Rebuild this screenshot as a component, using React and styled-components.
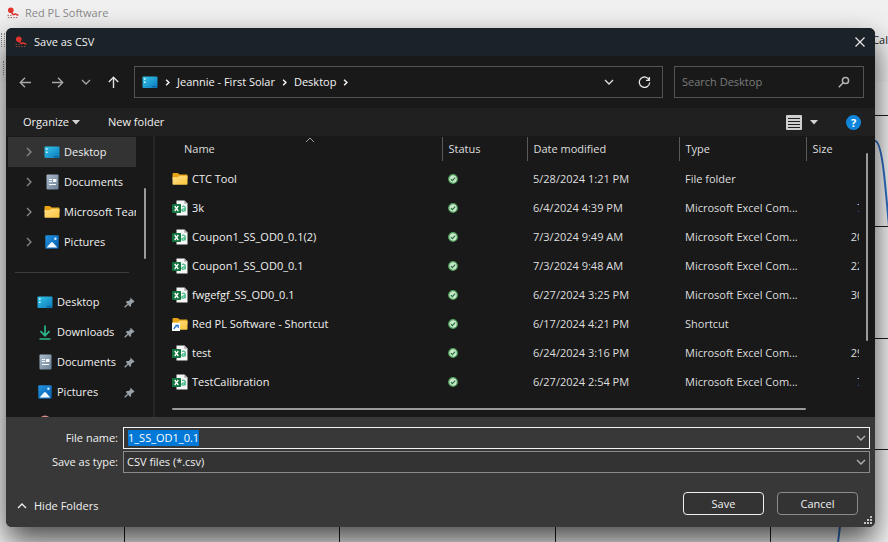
import React, { useEffect, useRef, useState } from 'react';
import styled, { createGlobalStyle } from 'styled-components';

const GlobalStyle = createGlobalStyle`
  * {
    box-sizing: border-box;
  }

  body {
    margin: 0;
    background: #f0f0f0;
    font-family: 'Open Sans', 'Noto Sans', sans-serif;
    font-size: 11px;
    line-height: 16px;
  }

  button, input, select {
    font: inherit;
    color: inherit;
  }

  svg {
    display: block;
    flex: none;
  }
`;

const Screen = styled.div`
  position: relative;
  display: flex;
  min-height: 100vh;
  padding: 28px 13px 15px 6px;
  overflow: hidden;
`;

/* main window behind the dialog */
const Backdrop = styled.div`
  position: absolute;
  inset: 0;
  display: flex;
  flex-direction: column;
  background: #f0f0f0;
`;

const WindowTitle = styled.div`
  display: flex;
  align-items: center;
  gap: 6px;
  height: 26px;
  padding-left: 7px;
  color: #8a8a8a;
`;

const WindowToolbar = styled.div`
  display: flex;
  align-items: center;
  justify-content: space-between;
  height: 28px;
  padding-left: ${(props) => props.$indent}px;
  color: #222;
`;

const Grip = styled.span`
  width: 4px;
  height: 14px;
  border-left: 1px dotted #888;
  border-right: 1px dotted #888;
`;

const PlotArea = styled.div`
  flex: 1;
  min-height: 0;
  background: #f5f5f5;

  svg {
    width: 100%;
    height: 100%;
  }
`;

const Dialog = styled.div`
  position: relative;
  display: flex;
  flex: 1;
  flex-direction: column;
  min-width: 0;
  overflow: hidden;
  border-radius: 6px;
  background: #191919;
  color: #f0f0f0;
  box-shadow: 0 14px 30px rgba(0, 0, 0, 0.7);
`;

const TitleBar = styled.div`
  display: flex;
  align-items: center;
  gap: 7px;
  height: 28px;
  padding: 0 8px 0 9px;
  background: #1b2228;
`;

const DialogTitle = styled.h1`
  flex: 1;
  margin: 0;
  font-size: 11px;
  font-weight: 400;
`;

const IconButton = styled.button`
  display: flex;
  align-items: center;
  justify-content: center;
  width: ${(props) => props.$width || 14}px;
  height: 16px;
  padding: 0;
  border: 0;
  background: none;
  color: ${(props) => props.$color || '#e0e0e0'};
`;

const NavBar = styled.div`
  display: flex;
  align-items: center;
  height: 52px;
  padding: 0 11px;
`;

const NavButtons = styled.div`
  display: flex;
  gap: 16px;
  width: 117px;
`;

const AddressBar = styled.div`
  display: flex;
  flex: 1;
  align-items: center;
  height: 32px;
  padding: 0 11px 0 7px;
  border: 1px solid #535353;
`;

const Crumbs = styled.div`
  display: flex;
  flex: 1;
  align-items: center;
  gap: 6px;
`;

const Crumb = styled.a`
  color: #f4f4f4;
  text-decoration: none;
`;

const AddressActions = styled.div`
  display: flex;
  gap: 21px;
`;

const SearchBox = styled.div`
  display: flex;
  align-items: center;
  width: 190px;
  height: 32px;
  margin-left: 11px;
  padding: 0 13px 0 7px;
  border: 1px solid #535353;
`;

const SearchInput = styled.input`
  flex: 1;
  min-width: 0;
  padding: 0;
  border: 0;
  outline: 0;
  background: none;

  &::placeholder {
    color: #7b7b7b;
  }
`;

const CommandBar = styled.div`
  display: flex;
  align-items: center;
  justify-content: space-between;
  height: 28px;
  padding: 0 14px 0 17px;
  background: #202020;
`;

const CommandGroup = styled.div`
  display: flex;
  align-items: center;
  gap: ${(props) => props.$gap}px;
`;

const Command = styled.button`
  display: flex;
  align-items: center;
  gap: 3px;
  padding: 0;
  border: 0;
  background: none;
`;

const HelpBadge = styled.button`
  width: 15px;
  height: 15px;
  margin-left: 20px;
  padding: 0;
  border: 0;
  border-radius: 50%;
  background: #0f86dc;
  color: #fff;
  font-weight: 700;
  line-height: 15px;
`;

const Body = styled.div`
  display: flex;
  flex: 1;
  min-height: 0;
`;

const Sidebar = styled.nav`
  display: flex;
  width: 149px;
  height: 281px;
  padding: 1px 0 0 2px;
  overflow: hidden;
  border-right: 2px solid #262626;
`;

const Tree = styled.div`
  width: 128px;
`;

const TreeItem = styled.a`
  display: flex;
  align-items: center;
  height: 30px;
  padding: 0 ${(props) => (props.$pinned ? 3 : 0)}px 0 ${(props) => (props.$pinned ? 29 : 16)}px;
  overflow: hidden;
  background: ${(props) => (props.$active ? '#333' : 'none')};
  color: #f0f0f0;
  text-decoration: none;
  white-space: nowrap;
`;

const TreeIcon = styled.span`
  display: flex;
  justify-content: center;
  width: 16px;
  margin: 0 4px 0 ${(props) => (props.$pinned ? 0 : 10)}px;
`;

const TreeLabel = styled.span`
  flex: 1;
`;

const PinSlot = styled.span`
  width: 9px;
`;

const TreeDivider = styled.hr`
  height: 1px;
  margin: 15px 7px 14px;
  border: 0;
  background: #3c3c3c;
`;

const SidebarScroll = styled.div`
  width: 2px;
  height: 71px;
  margin: 51px 0 0 8px;
  border-radius: 1px;
  background: #9b9b9b;
`;

const Listing = styled.div`
  display: flex;
  flex: 1;
  flex-direction: column;
  min-width: 0;
  height: 281px;
  padding: 1px 7px 0 17px;
`;

const ListingRow = styled.div`
  display: flex;
  justify-content: space-between;
  height: 265px;
`;

const TableClip = styled.div`
  flex: 1;
  min-width: 0;
  overflow: hidden;
`;

const FileTable = styled.table`
  width: 708px;
  table-layout: fixed;
  border-collapse: collapse;
`;

const HeadCell = styled.th`
  height: 24px;
  padding: 0 0 0 ${(props) => (props.$first ? 12 : 6)}px;
  border-left: ${(props) => (props.$first ? '0' : '1px solid #5a5a5a')};
  color: #dedede;
  font-weight: 400;
  text-align: left;
`;

const HeadName = styled.div`
  position: relative;

  svg {
    position: absolute;
    top: -6px;
    left: 121px;
  }
`;

const Spacer = styled.td`
  height: 3px;
  padding: 0;
`;

const Cell = styled.td`
  height: 29px;
  padding: 0 0 0 ${(props) => props.$inset || 0}px;
  color: #dedede;
  text-align: ${(props) => props.$align || 'left'};
  white-space: nowrap;
`;

const FileName = styled.div`
  display: flex;
  align-items: center;
  gap: 4px;
  color: #f0f0f0;
`;

const VerticalThumb = styled.div`
  width: 2px;
  height: 188px;
  margin: 16px 0 0 7px;
  border-radius: 1px;
  background: #9b9b9b;
`;

const HorizontalThumb = styled.div`
  width: calc(100% - 62px);
  height: 2px;
  margin-top: 6px;
  border-radius: 1px;
  background: #9b9b9b;
`;

const Footer = styled.form`
  display: flex;
  flex-direction: column;
  height: 110px;
  padding: 10px 5px 0;
  background: #383838;
`;

const Fields = styled.div`
  display: grid;
  grid-template-columns: 107px 1fr;
  row-gap: 2px;
  column-gap: 5px;
  align-items: center;
`;

const FieldLabel = styled.label`
  text-align: right;
`;

const Field = styled.div`
  display: flex;
  align-items: center;
  position: relative;
  height: 22px;
  padding: 0 3px;
  border: 1px solid ${(props) => (props.$focused ? '#f4f4f4' : '#8a8a8a')};
  background: ${(props) => (props.$focused ? '#383838' : '#333')};
`;

const NameInput = styled.input`
  flex: 1;
  min-width: 0;
  padding: 0 1px;
  border: 0;
  outline: 0;
  background: none;

  &::selection {
    background: #0078d7;
    color: #fff;
  }
`;

const TypeSelect = styled.select`
  flex: 1;
  padding: 0;
  border: 0;
  outline: 0;
  appearance: none;
  background: #333;
`;

const FieldArrow = styled.span`
  position: absolute;
  right: 3px;
  color: #b4b4b4;
  pointer-events: none;
`;

const Actions = styled.div`
  display: flex;
  align-items: center;
  gap: 13px;
  padding: 19px 12px 0 6px;
`;

const HideFolders = styled.button`
  display: flex;
  align-items: center;
  gap: 7px;
  margin: 5px auto 0 0;
  padding: 0;
  border: 0;
  background: none;
`;

const ActionButton = styled.button`
  width: 81px;
  height: 23px;
  padding: 0;
  border: 1px solid ${(props) => (props.$primary ? '#f0f0f0' : '#8c8c8c')};
  border-radius: 4px;
  background: #333;
`;

const ResizeGrip = styled.svg`
  position: absolute;
  right: 2px;
  bottom: 2px;
`;

const Chevron = ({ dir = 'down', size = 10, color = 'currentColor', width = 1.3 }) => {
  const paths = {
    down: 'M1 3l4 4 4-4',
    up: 'M1 7l4-4 4 4',
    right: 'M3 1l4 4-4 4',
  };
  return (
    <svg width={size} height={size} viewBox="0 0 10 10" fill="none" stroke={color} strokeWidth={width}>
      <path d={paths[dir]} />
    </svg>
  );
};

const Caret = () => (
  <svg width="8" height="5" viewBox="0 0 8 5">
    <path d="M0 0h8L4 4.6z" fill="#d4d4d4" />
  </svg>
);

const AppLogo = () => (
  <svg width="12" height="12" viewBox="0 0 12 12">
    <circle cx="3.8" cy="3.3" r="2.8" fill="#e0342c" />
    <path d="M4.2 5l2 2.6 2.4-.6 2.8 1.4" fill="none" stroke="#e0342c" strokeWidth="1.5" />
    <path d="M.5 8.3h4M.8 10.6h10.4" stroke="#a0504a" strokeWidth=".9" strokeDasharray="1.5 1.2" />
  </svg>
);

const DesktopIcon = () => (
  <svg width="16" height="13" viewBox="0 0 16 13">
    <defs>
      <linearGradient id="desktopFill" x1="0" y1="0" x2="1" y2="1">
        <stop offset="0" stopColor="#35c6e8" />
        <stop offset="1" stopColor="#0b78bd" />
      </linearGradient>
    </defs>
    <rect x=".5" y=".5" width="15" height="11.5" rx="1" fill="url(#desktopFill)" />
    <path d="M2 2.2h1.6v1.5H2zM2 5.4h1.6v1.5H2z" fill="#d7f6ff" />
    <path d="M10.5 10h1v1.2h-1zM12.5 10h1v1.2h-1z" fill="#063f66" />
  </svg>
);

const DocumentIcon = () => (
  <svg width="13" height="16" viewBox="0 0 13 16">
    <defs>
      <linearGradient id="documentFill" x1="0" y1="0" x2="1" y2="1">
        <stop offset="0" stopColor="#a9bccb" />
        <stop offset="1" stopColor="#6c8096" />
      </linearGradient>
    </defs>
    <rect x=".5" y=".5" width="12" height="15" rx="1" fill="url(#documentFill)" />
    <path d="M3 5.5h3M3 7.5h3M3 10.5h7" stroke="#f7fbff" />
    <rect x="7" y="5" width="3.4" height="3" fill="#f7fbff" />
  </svg>
);

const FolderIcon = ({ shortcut }) => (
  <svg width="16" height="14" viewBox="0 0 16 14">
    <defs>
      <linearGradient id="folderFill" x1="0" y1="0" x2="1" y2="1">
        <stop offset="0" stopColor="#ffe08a" />
        <stop offset="1" stopColor="#fbc53c" />
      </linearGradient>
    </defs>
    <path d="M.5 2.2C.5 1.3 1 1 1.8 1h3.4c.6 0 .9.2 1.3.6l1 1h7c.6 0 1 .4 1 1V7H.5z" fill="#e8a317" />
    <path d="M.5 5.2h5.4l1.6-1.4h7c.6 0 1 .4 1 1v7c0 .6-.4 1-1 1h-13c-.6 0-1-.4-1-1z" fill="url(#folderFill)" />
    {shortcut && (
      <g>
        <rect x="0" y="6" width="8" height="8" fill="#fff" />
        <path d="M2 12.3c.2-1.8 1-2.8 2.8-3.2M3.4 8.3h2.8V11" fill="none" stroke="#1f6fd0" strokeWidth="1.2" />
      </g>
    )}
  </svg>
);

const PicturesIcon = () => (
  <svg width="14" height="14" viewBox="0 0 14 14">
    <defs>
      <linearGradient id="picturesFill" x1="0" y1="0" x2="1" y2="1">
        <stop offset="0" stopColor="#2193e0" />
        <stop offset="1" stopColor="#0a5eae" />
      </linearGradient>
    </defs>
    <rect x=".3" y=".3" width="13.4" height="13.4" rx="1" fill="url(#picturesFill)" />
    <path d="M1.6 12.6L6 7.6c.5-.6 1.4-.6 1.9 0l4.4 5z" fill="#f1f9ff" />
    <circle cx="10.4" cy="3.8" r="1.2" fill="#d5efff" />
  </svg>
);

const DownloadIcon = () => (
  <svg width="12" height="15" viewBox="0 0 12 15" fill="none" stroke="#2bb58a" strokeWidth="1.7">
    <path d="M6 .5v10M1.5 6.2L6 10.7l4.5-4.5M.5 14h11" />
  </svg>
);

const MusicIcon = () => (
  <svg width="14" height="14" viewBox="0 0 14 14">
    <circle cx="7" cy="7" r="6.5" fill="#d98a86" />
  </svg>
);

const PinIcon = () => (
  <svg width="11" height="11" viewBox="0 0 11 11">
    <path d="M6.4.5l4.1 4.1-1 .9-.6-.1-1.9 1.9.1 1.8-1 .9L1.9 5l.9-1 1.9.1 1.8-1.9-.1-.7z" fill="#98a0a8" />
    <path d="M3.8 7.2L.7 10.3" stroke="#98a0a8" strokeWidth="1.3" />
  </svg>
);

const CsvIcon = () => (
  <svg width="16" height="16" viewBox="0 0 16 16">
    <path d="M4.5.5h8l3 3v12h-11z" fill="#f5f5f5" />
    <path d="M12.3.5v3.2h3.2z" fill="#a8a8a8" />
    <path d="M10 6.6c1.2-.7 3.2-.5 3.2 1v3.6M13.2 8.6c-4 0-4.2 2.6-2 2.6 1.3 0 2-.8 2-1.6" fill="none" stroke="#35b57c" strokeWidth="1.2" />
    <rect x="0" y="4" width="9" height="9" rx=".8" fill="#13733f" />
    <path d="M2.7 6l3.6 5M6.3 6l-3.6 5" stroke="#fff" strokeWidth="1.3" />
  </svg>
);

const SyncedIcon = () => (
  <svg width="10" height="10" viewBox="0 0 10 10">
    <circle cx="5" cy="5" r="4.3" fill="#c9e8cb" stroke="#4f9e5c" strokeWidth="1.2" />
    <path d="M2.9 5.1l1.5 1.5 2.8-2.9" fill="none" stroke="#24703a" strokeWidth="1.2" />
  </svg>
);

const ArrowIcon = ({ dir }) => {
  const paths = {
    back: 'M12 6.5H1.5M6 1.8L1.3 6.5 6 11.2',
    forward: 'M1 6.5h10.5M7 1.8l4.7 4.7L7 11.2',
    up: 'M6.5 12V1.5M1.8 6l4.7-4.7L11.2 6',
  };
  return (
    <svg width="13" height="13" viewBox="0 0 13 13" fill="none" stroke="currentColor" strokeWidth="1.4">
      <path d={paths[dir]} />
    </svg>
  );
};

const RefreshIcon = () => (
  <svg width="13" height="13" viewBox="0 0 13 13" fill="none" stroke="currentColor" strokeWidth="1.3">
    <path d="M11.3 4.2A5.2 5.2 0 1 0 11.7 6.5M11.4 1v3.4H8" />
  </svg>
);

const SearchIcon = () => (
  <svg width="12" height="12" viewBox="0 0 12 12" fill="none" stroke="#b4b4b4" strokeWidth="1.5">
    <circle cx="7.5" cy="4.5" r="3.1" />
    <path d="M5.2 6.8L.8 11.2" />
  </svg>
);

const ViewIcon = () => (
  <svg width="16" height="15" viewBox="0 0 16 15">
    <rect width="16" height="15" rx="1" fill="#cfcfcf" />
    <path d="M2 3.5h12M2 6.5h12M2 9.5h12M2 12.5h12" stroke="#202020" />
  </svg>
);

const places = [
  { label: 'Desktop', icon: DesktopIcon, active: true },
  { label: 'Documents', icon: DocumentIcon },
  { label: 'Microsoft Teams', icon: FolderIcon },
  { label: 'Pictures', icon: PicturesIcon },
];

const pinned = [
  { label: 'Desktop', icon: DesktopIcon },
  { label: 'Downloads', icon: DownloadIcon },
  { label: 'Documents', icon: DocumentIcon },
  { label: 'Pictures', icon: PicturesIcon },
];

const csvType = 'Microsoft Excel Com...';

const files = [
  { name: 'CTC Tool', date: '5/28/2024 1:21 PM', type: 'File folder', kind: 'folder' },
  { name: '3k', date: '6/4/2024 4:39 PM', type: csvType, size: '7 KB' },
  { name: 'Coupon1_SS_OD0_0.1(2)', date: '7/3/2024 9:49 AM', type: csvType, size: '20 KB' },
  { name: 'Coupon1_SS_OD0_0.1', date: '7/3/2024 9:48 AM', type: csvType, size: '22 KB' },
  { name: 'fwgefgf_SS_OD0_0.1', date: '6/27/2024 3:25 PM', type: csvType, size: '30 KB' },
  { name: 'Red PL Software - Shortcut', date: '6/17/2024 4:21 PM', type: 'Shortcut', kind: 'shortcut' },
  { name: 'test', date: '6/24/2024 3:16 PM', type: csvType, size: '29 KB' },
  { name: 'TestCalibration', date: '6/27/2024 2:54 PM', type: csvType, size: '7 KB' },
];

const MainWindow = () => (
  <Backdrop>
    <WindowTitle>
      <AppLogo />
      Red PL Software
    </WindowTitle>
    <WindowToolbar $indent={1}>
      <Grip />
      <span>Cal</span>
    </WindowToolbar>
    <WindowToolbar $indent={3}>
      <Grip />
    </WindowToolbar>
    <PlotArea>
      <svg viewBox="0 0 888 460" preserveAspectRatio="none" fill="none">
        <path
          d="M124.5 32v428M339.5 32v428M555.5 32v428M770.5 32v428M124 33.5h764M124 144.5h764M124 256.5h764M124 367.5h764"
          stroke="#1c1c1c"
        />
        <path d="M838 460c10-60 22-401 37-401 7 0 10 40 14 86" stroke="#2f6fc4" strokeWidth="2" />
      </svg>
    </PlotArea>
  </Backdrop>
);

const FolderTree = () => (
  <Sidebar>
    <Tree>
      {places.map(({ label, icon: Icon, active }) => (
        <TreeItem href="#" key={label} $active={active}>
          <Chevron dir="right" color="#8a8a8a" />
          <TreeIcon>
            <Icon />
          </TreeIcon>
          <TreeLabel>{label}</TreeLabel>
        </TreeItem>
      ))}
      <TreeDivider />
      {pinned.map(({ label, icon: Icon }) => (
        <TreeItem href="#" key={label} $pinned>
          <TreeIcon $pinned>
            <Icon />
          </TreeIcon>
          <TreeLabel>{label}</TreeLabel>
          <PinSlot>
            <PinIcon />
          </PinSlot>
        </TreeItem>
      ))}
      <TreeItem href="#" $pinned aria-label="Music">
        <TreeIcon $pinned>
          <MusicIcon />
        </TreeIcon>
      </TreeItem>
    </Tree>
    <SidebarScroll />
  </Sidebar>
);

const FileList = () => (
  <Listing>
    <ListingRow>
      <TableClip>
        <FileTable>
          <colgroup>
            <col width="270" />
            <col width="85" />
            <col width="152" />
            <col width="127" />
            <col />
          </colgroup>
          <thead>
            <tr>
              <HeadCell $first>
                <HeadName>
                  Name
                  <Chevron dir="up" color="#9b9b9b" width={1} />
                </HeadName>
              </HeadCell>
              <HeadCell>Status</HeadCell>
              <HeadCell>Date modified</HeadCell>
              <HeadCell>Type</HeadCell>
              <HeadCell>Size</HeadCell>
            </tr>
          </thead>
          <tbody>
            <tr>
              <Spacer colSpan={5} />
            </tr>
            {files.map((file) => (
              <tr key={file.name}>
                <Cell>
                  <FileName>
                    {file.kind ? <FolderIcon shortcut={file.kind === 'shortcut'} /> : <CsvIcon />}
                    {file.name}
                  </FileName>
                </Cell>
                <Cell $inset={6}>
                  <SyncedIcon />
                </Cell>
                <Cell $inset={6}>{file.date}</Cell>
                <Cell $inset={6}>{file.type}</Cell>
                <Cell $align="right">{file.size}</Cell>
              </tr>
            ))}
          </tbody>
        </FileTable>
      </TableClip>
      <VerticalThumb />
    </ListingRow>
    <HorizontalThumb />
  </Listing>
);

const SaveDialog = () => {
  const [fileName, setFileName] = useState('1_SS_OD1_0.1');
  const nameRef = useRef(null);

  useEffect(() => {
    nameRef.current.focus();
    nameRef.current.select();
  }, []);

  return (
    <Dialog role="dialog" aria-label="Save as CSV">
      <TitleBar>
        <AppLogo />
        <DialogTitle>Save as CSV</DialogTitle>
        <IconButton aria-label="Close">
          <svg width="12" height="12" viewBox="0 0 12 12" stroke="#e8e8e8" strokeWidth="1.2">
            <path d="M1.5 1.5l9 9M10.5 1.5l-9 9" />
          </svg>
        </IconButton>
      </TitleBar>

      <NavBar>
        <NavButtons>
          <IconButton aria-label="Back" $color="#a8a8a8" $width={16}>
            <ArrowIcon dir="back" />
          </IconButton>
          <IconButton aria-label="Forward" $color="#a8a8a8" $width={16}>
            <ArrowIcon dir="forward" />
          </IconButton>
          <IconButton aria-label="Recent locations" $color="#a8a8a8" $width={10}>
            <Chevron />
          </IconButton>
          <IconButton aria-label="Up" $width={13}>
            <ArrowIcon dir="up" />
          </IconButton>
        </NavButtons>
        <AddressBar>
          <Crumbs>
            <DesktopIcon />
            <Chevron dir="right" size={7} width={2.2} />
            <Crumb href="#">Jeannie - First Solar</Crumb>
            <Chevron dir="right" size={7} width={2.2} />
            <Crumb href="#">Desktop</Crumb>
            <Chevron dir="right" size={7} width={2.2} />
          </Crumbs>
          <AddressActions>
            <IconButton aria-label="Previous locations">
              <Chevron />
            </IconButton>
            <IconButton aria-label="Refresh">
              <RefreshIcon />
            </IconButton>
          </AddressActions>
        </AddressBar>
        <SearchBox>
          <SearchInput type="text" placeholder="Search Desktop" aria-label="Search Desktop" />
          <SearchIcon />
        </SearchBox>
      </NavBar>

      <CommandBar>
        <CommandGroup $gap={28}>
          <Command>
            Organize
            <Caret />
          </Command>
          <Command>New folder</Command>
        </CommandGroup>
        <CommandGroup $gap={8}>
          <IconButton aria-label="Change your view" $width={16}>
            <ViewIcon />
          </IconButton>
          <IconButton aria-label="More options" $width={8}>
            <Caret />
          </IconButton>
          <HelpBadge aria-label="Get help">?</HelpBadge>
        </CommandGroup>
      </CommandBar>

      <Body>
        <FolderTree />
        <FileList />
      </Body>

      <Footer onSubmit={(e) => e.preventDefault()}>
        <Fields>
          <FieldLabel htmlFor="fileName">File name:</FieldLabel>
          <Field $focused>
            <NameInput
              type="text"
              id="fileName"
              ref={nameRef}
              value={fileName}
              onChange={(e) => setFileName(e.target.value)}
            />
            <FieldArrow>
              <Chevron />
            </FieldArrow>
          </Field>
          <FieldLabel htmlFor="fileType">Save as type:</FieldLabel>
          <Field>
            <TypeSelect id="fileType">
              <option>CSV files (*.csv)</option>
            </TypeSelect>
            <FieldArrow>
              <Chevron />
            </FieldArrow>
          </Field>
        </Fields>
        <Actions>
          <HideFolders type="button">
            <Chevron dir="up" />
            Hide Folders
          </HideFolders>
          <ActionButton type="submit" $primary>
            Save
          </ActionButton>
          <ActionButton type="button">Cancel</ActionButton>
        </Actions>
      </Footer>
      <ResizeGrip width="9" height="9" viewBox="0 0 9 9">
        <path d="M6 0h2v2H6zM3 3h2v2H3zM6 3h2v2H6zM0 6h2v2H0zM3 6h2v2H3zM6 6h2v2H6z" fill="#c4c4c4" />
      </ResizeGrip>
    </Dialog>
  );
};

const App = () => (
  <Screen>
    <GlobalStyle />
    <MainWindow />
    <SaveDialog />
  </Screen>
);

export default App;
